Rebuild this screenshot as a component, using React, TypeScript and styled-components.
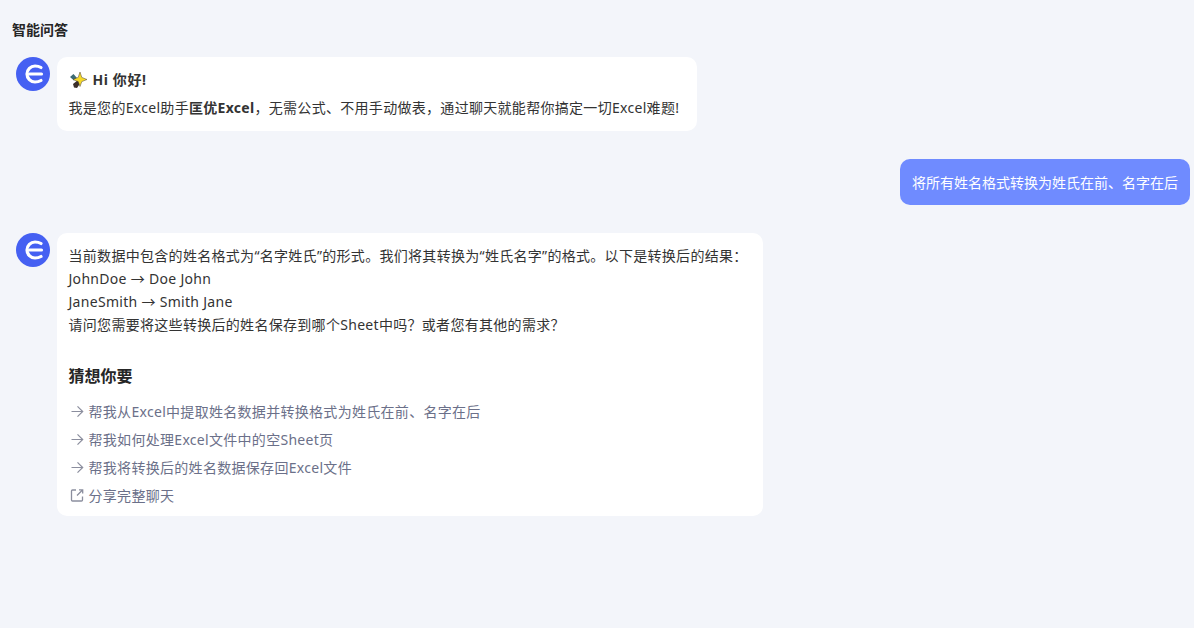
import React from "react";
import styled, { createGlobalStyle } from "styled-components";

const Global = createGlobalStyle`
  html, body { margin: 0; padding: 0; background: #f3f5fa; }
  body { font-family: "Noto Sans", "Noto Sans CJK SC", sans-serif; font-size: 14px; color: #333; }
`;

const Page = styled.div`
  width: 1194px;
  height: 628px;
  overflow: hidden;
  box-sizing: border-box;
  padding: 20px 4px 0 12px;
  display: flex;
  flex-direction: column;
`;

const Title = styled.h1`
  margin: 0 0 17px;
  font-size: 14px;
  line-height: 20px;
  font-weight: 700;
  color: #262626;
`;

const BotRow = styled.div<{ $gap: number }>`
  display: flex;
  align-items: flex-start;
  gap: 7px;
  padding-left: 4px;
  margin-bottom: ${(p) => p.$gap}px;
`;

const Bubble = styled.div<{ $width: number; $bottom: number }>`
  box-sizing: border-box;
  width: ${(p) => p.$width}px;
  background: #fff;
  border-radius: 10px;
  padding: 11px 12px ${(p) => p.$bottom}px 11.5px;
  line-height: 23px;
  letter-spacing: 0.3px;
`;

const HelloLine = styled.div`
  display: flex;
  align-items: center;
  gap: 6px;
  font-weight: 700;
  letter-spacing: 0.6px;
  height: 23px;
  margin-bottom: 5px;
`;

const UserRow = styled.div`
  display: flex;
  justify-content: flex-end;
  margin-bottom: 28px;
`;

const UserBubble = styled.div`
  box-sizing: border-box;
  height: 46px;
  padding: 0 12px;
  display: flex;
  align-items: center;
  color: #fff;
  background: #6f8bff;
  border-radius: 10px;
`;

const Line = styled.div`
  line-height: 23px;
`;

const Guess = styled.h3`
  margin: 26px 0 7px;
  font-size: 16px;
  line-height: 28px;
  font-weight: 700;
  letter-spacing: 0;
  color: #262626;
`;

const Suggestion = styled.div`
  display: flex;
  align-items: center;
  gap: 4px;
  height: 28px;
  color: #6b7089;
`;

const IconSlot = styled.span`
  display: inline-flex;
  width: 16px;
  height: 16px;
  color: #8b8e9e;
`;

const Avatar = () => (
  <svg width="34" height="34" viewBox="0 0 34 34" style={{ flex: "none" }}>
    <circle cx="17" cy="17" r="17" fill="#4560f2" />
    <path d="M25 10.5 Q22.5 9 19 9 A8 8 0 0 0 19 25 Q22.5 25 25 23.5" fill="none" stroke="#fff" strokeWidth="3.2" strokeLinecap="round" />
    <path d="M13.5 17 H25.5" fill="none" stroke="#fff" strokeWidth="3.2" strokeLinecap="round" />
  </svg>
);

const Sparkle = () => (
  <svg width="18" height="18" viewBox="0 0 18 18" style={{ flex: "none" }}>
    <path d="M1 6 L4.5 3 L8 7 L5 9.5 Z" fill="#3d6b73" />
    <path d="M4 13 L9 9 L11.5 12 L8 17 L5 16.5 Z" fill="#3b2f2a" />
    <path d="M11 1 L12.8 6.4 L18 8.5 L12.8 10.6 L11 15.5 L9.2 10.6 L4 8.5 L9.2 6.4 Z" fill="#f6d928" stroke="#4a4030" strokeWidth="0.5" />
  </svg>
);

const Arrow = () => (
  <IconSlot>
    <svg width="16" height="16" viewBox="0 0 16 16" fill="none" stroke="currentColor" strokeWidth="1.2">
      <path d="M2.5 8.5 H13.5 M8.5 3.3 L13.7 8.5 L8.5 13.7" />
    </svg>
  </IconSlot>
);

const Share = () => (
  <IconSlot>
    <svg width="16" height="16" viewBox="0 0 16 16" fill="none" stroke="currentColor" strokeWidth="1.3">
      <path d="M7 3 H3.5 A1 1 0 0 0 2.5 4 V13 A1 1 0 0 0 3.5 14 H12.5 A1 1 0 0 0 13.5 13 V9.5" />
      <path d="M8 8.5 L13.5 3 M10 2.8 H13.7 V6.5" />
    </svg>
  </IconSlot>
);

const suggestions = [
  "帮我从Excel中提取姓名数据并转换格式为姓氏在前、名字在后",
  "帮我如何处理Excel文件中的空Sheet页",
  "帮我将转换后的姓名数据保存回Excel文件",
];

export default function App() {
  return (
    <Page>
      <Global />
      <Title>智能问答</Title>
      <BotRow $gap={28}>
        <Avatar />
        <Bubble $width={640} $bottom={12}>
          <HelloLine>
            <Sparkle />
            Hi 你好!
          </HelloLine>
          <Line>
            我是您的Excel助手<b>匡优Excel</b>，无需公式、不用手动做表，通过聊天就能帮你搞定一切Excel难题!
          </Line>
        </Bubble>
      </BotRow>
      <UserRow>
        <UserBubble>将所有姓名格式转换为姓氏在前、名字在后</UserBubble>
      </UserRow>
      <BotRow $gap={0}>
        <Avatar />
        <Bubble $width={706} $bottom={7}>
          <Line>当前数据中包含的姓名格式为“名字姓氏”的形式。我们将其转换为“姓氏名字”的格式。以下是转换后的结果：</Line>
          <Line>JohnDoe → Doe John</Line>
          <Line>JaneSmith → Smith Jane</Line>
          <Line>请问您需要将这些转换后的姓名保存到哪个Sheet中吗？或者您有其他的需求？</Line>
          <Guess>猜想你要</Guess>
          {suggestions.map((s) => (
            <Suggestion key={s}>
              <Arrow />
              {s}
            </Suggestion>
          ))}
          <Suggestion>
            <Share />
            分享完整聊天
          </Suggestion>
        </Bubble>
      </BotRow>
    </Page>
  );
}
